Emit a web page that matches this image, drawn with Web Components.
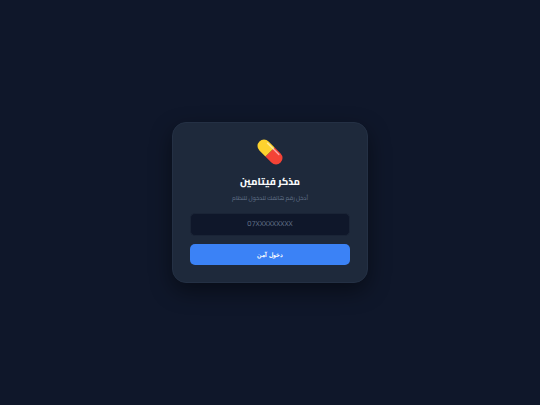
<!DOCTYPE html>
<html lang="ar" dir="rtl">
<head>
<meta charset="utf-8">
<title>مذكر فيتامين</title>
<style>
    html, body { height: 100%; }
    body {
        margin: 0;
        background: #0f172a;
        display: flex;
        align-items: center;
        justify-content: center;
        font-family: "Cairo", "DejaVu Sans", sans-serif;
    }
</style>
</head>
<body>
<login-card heading="مذكر فيتامين" hint="أدخل رقم هاتفك للدخول للنظام">
    <phone-field placeholder="07XXXXXXXXX"></phone-field>
    <login-button>دخول آمن</login-button>
</login-card>

<script>
class LoginCard extends HTMLElement {
    constructor() {
        super();
        this.attachShadow({ mode: 'open' });
    }

    connectedCallback() {
        this.shadowRoot.innerHTML = `
            <style>
                :host {
                    display: flex;
                    flex-direction: column;
                    align-items: center;
                    box-sizing: border-box;
                    width: 196px;
                    height: 161px;
                    padding: 14px 17px 17px;
                    background: #1e293b;
                    border: 1px solid #243044;
                    border-radius: 14px;
                    box-shadow: 0 8px 22px rgba(0, 0, 0, 0.45);
                }
                svg { display: block; width: 30px; height: 30px; }
                h1 {
                    margin: 5px 0 0;
                    font-size: 9.7px;
                    line-height: 19px;
                    font-weight: 800;
                    color: #f8fafc;
                }
                p {
                    margin: 1px 0 0;
                    font-size: 6px;
                    line-height: 11px;
                    color: #64748b;
                }
                .form {
                    display: flex;
                    flex-direction: column;
                    gap: 8px;
                    width: 100%;
                    margin-top: 10px;
                }
            </style>
            <svg viewBox="0 0 30 30">
                <g transform="rotate(45 15 15)">
                    <path d="M15 8.5v13h8.5a6.5 6.5 0 0 0 0-13z" fill="#f44336"/>
                    <path d="M15 8.5H6.5a6.5 6.5 0 0 0 0 13H15z" fill="#fdd22e"/>
                    <path d="M15 10.5h8" stroke="#fca5a5" stroke-width="1.4" stroke-linecap="round" fill="none"/>
                    <path d="M7 10.5h8" stroke="#fee99a" stroke-width="1.4" stroke-linecap="round" fill="none"/>
                </g>
            </svg>
            <h1>${this.getAttribute('heading')}</h1>
            <p>${this.getAttribute('hint')}</p>
            <div class="form"><slot></slot></div>
        `;
    }
}

class PhoneField extends HTMLElement {
    constructor() {
        super();
        this.attachShadow({ mode: 'open' });
    }

    connectedCallback() {
        this.shadowRoot.innerHTML = `
            <style>
                :host { display: block; }
                input {
                    display: block;
                    box-sizing: border-box;
                    width: 100%;
                    height: 23px;
                    padding: 0 8px 3px;
                    background: #0f172a;
                    border: 1px solid #1a2436;
                    border-radius: 5px;
                    outline: none;
                    text-align: center;
                    font-family: "Cairo", sans-serif;
                    font-size: 7.4px;
                    color: #f1f5f9;
                }
                input::placeholder { color: #64748b; opacity: 1; }
            </style>
            <input type="tel" placeholder="${this.getAttribute('placeholder')}">
        `;
    }
}

class LoginButton extends HTMLElement {
    constructor() {
        super();
        this.attachShadow({ mode: 'open' });
    }

    connectedCallback() {
        this.shadowRoot.innerHTML = `
            <style>
                :host {
                    display: flex;
                    align-items: center;
                    justify-content: center;
                    height: 21px;
                    background: #3b82f6;
                    border-radius: 5px;
                    color: #fff;
                    font-family: sans-serif;
                    font-size: 5.6px;
                    font-weight: 700;
                    cursor: pointer;
                }
            </style>
            <slot></slot>
        `;
    }
}

customElements.define('login-card', LoginCard);
customElements.define('phone-field', PhoneField);
customElements.define('login-button', LoginButton);
</script>
</body>
</html>
